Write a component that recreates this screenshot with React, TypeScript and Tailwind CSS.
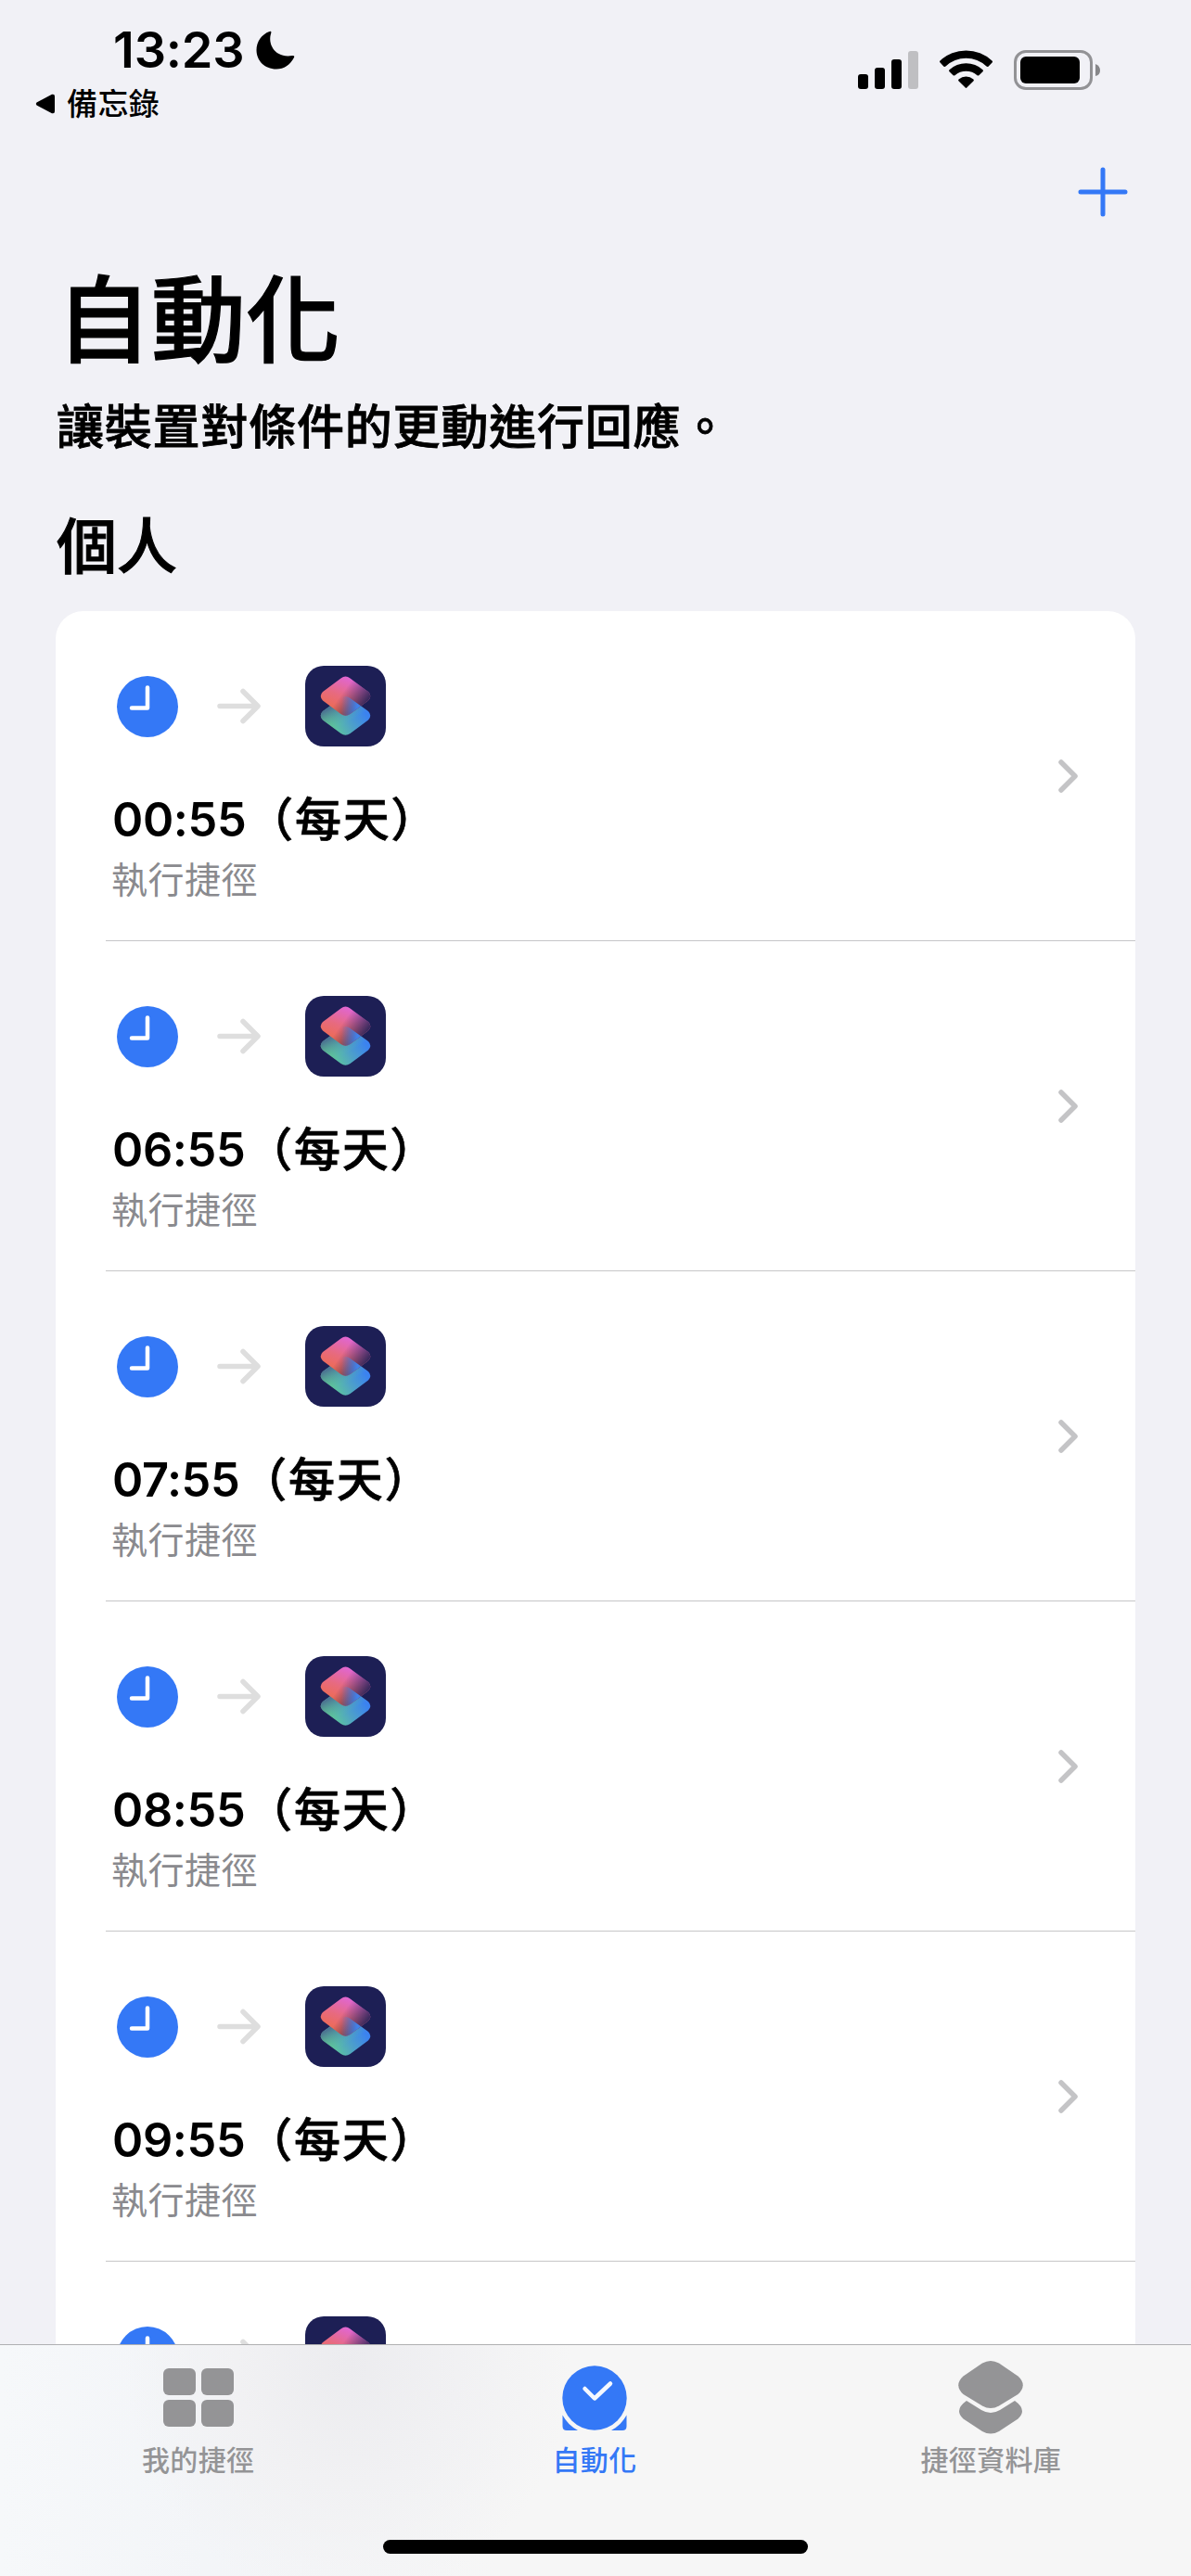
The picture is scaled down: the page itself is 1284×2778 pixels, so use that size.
import React from "react";

const rows = ["00:55", "06:55", "07:55", "08:55", "09:55"];

function StatusIcons() {
  return (
    <svg width="264" height="46" viewBox="0 0 264 46" className="block">
      <rect x="0" y="26" width="11" height="16" rx="3" />
      <rect x="18" y="19" width="11" height="23" rx="3" />
      <rect x="36" y="10" width="11" height="32" rx="3" />
      <rect x="54" y="1" width="11" height="41" rx="3" fill="#bfbfc2" />
      <path d="M88.500 11.500Q87.500 12.500 88.600 13.600L92.500 17.700Q93.500 18.500 94.500 17.600A32 32 0 0 1 138.500 17.600Q139.500 18.500 140.500 17.700L144.600 13.600Q145.500 12.500 144.500 11.500A41 41 0 0 0 88.500 11.500Z" />
      <path d="M98.500 21.200Q97.500 22.200 98.500 23.200L102.600 27.200Q103.500 28 104.500 27.200A18.500 18.500 0 0 1 128.500 27.200Q129.500 28 130.400 27.200L134.500 23.200Q135.500 22.200 134.500 21.200A26.500 26.500 0 0 0 98.500 21.200Z" />
      <path d="M108.600 31.400Q107.500 32.400 108.600 33.400L115.500 40.300Q116.500 41.500 117.500 40.300L124.400 33.400Q125.500 32.400 124.400 31.400A12.500 12.500 0 0 0 108.600 31.400Z" />
      <rect x="169.500" y="1.500" width="82" height="40" rx="11.500" fill="none" stroke="#929295" strokeWidth="3" />
      <rect x="175" y="7" width="64" height="29" rx="6" />
      <path d="M256 15Q261 17 261 22T256 28Z" fill="#87878a" />
    </svg>
  );
}

const UPPER = "M38.500 13.500Q43.500 9.500 48.500 13.500L68 28Q72.500 32.500 68 37.500L48.500 52Q43.500 55.500 38.500 52L19 37.500Q14.500 32.500 19 28Z";
const LOWER = "M38.500 35Q43.500 31 48.500 35L68 49Q72.500 53.500 68 58.500L48.500 73Q43.500 76.500 38.500 73L19 58.500Q14.500 53.500 19 49Z";

function ShortcutsIcon() {
  return (
    <svg width="87" height="87" viewBox="0 0 87 87" className="block">
      <defs>
        <linearGradient id="lower" x1="28" y1="68" x2="62" y2="46" gradientUnits="userSpaceOnUse">
          <stop offset="0" stopColor="#5fc898" />
          <stop offset="0.500" stopColor="#4ea1c8" />
          <stop offset="1" stopColor="#3b82f0" />
        </linearGradient>
        <linearGradient id="lowerFade" x1="26" y1="46" x2="38" y2="66" gradientUnits="userSpaceOnUse">
          <stop offset="0" stopColor="#4a6c90" stopOpacity="0.900" />
          <stop offset="1" stopColor="#5fc898" stopOpacity="0" />
        </linearGradient>
        <linearGradient id="upper" x1="46" y1="12" x2="32" y2="48" gradientUnits="userSpaceOnUse">
          <stop offset="0" stopColor="#e066d4" />
          <stop offset="0.550" stopColor="#e76a80" />
          <stop offset="1" stopColor="#ee6b52" />
        </linearGradient>
        <linearGradient id="upperFade" x1="44" y1="24" x2="66" y2="40" gradientUnits="userSpaceOnUse">
          <stop offset="0" stopColor="#2b2458" stopOpacity="0" />
          <stop offset="1" stopColor="#2b2458" stopOpacity="0.950" />
        </linearGradient>
        <linearGradient id="overlap" x1="39" y1="44" x2="56" y2="45" gradientUnits="userSpaceOnUse">
          <stop offset="0" stopColor="#4a84dd" stopOpacity="0" />
          <stop offset="1" stopColor="#4182ea" />
        </linearGradient>
        <clipPath id="upperClip">
          <path d={UPPER} />
        </clipPath>
      </defs>
      <rect width="87" height="87" rx="20" fill="#1d1f55" />
      <path d={LOWER} fill="url(#lower)" />
      <path d={LOWER} fill="url(#lowerFade)" />
      <path d={UPPER} fill="url(#upper)" />
      <path d={UPPER} fill="url(#upperFade)" />
      <path clipPath="url(#upperClip)" d={LOWER} fill="url(#overlap)" />
    </svg>
  );
}

function FlowIcons() {
  return (
    <div className="flex h-[87px] items-center">
      <svg width="78" height="78" viewBox="0 0 78 78" className="block">
        <circle cx="39" cy="39" r="33" fill="#3478f6" />
        <path d="M39 18.500V40.500H22" fill="none" stroke="white" strokeWidth="4.500" strokeLinecap="round" strokeLinejoin="round" />
      </svg>
      <svg width="50" height="40" viewBox="0 0 50 40" className="ml-[35px] block">
        <path d="M4 19.500H44M29 3.500L45 19.500L29 35.500" fill="none" stroke="#dedede" strokeWidth="5.500" strokeLinecap="round" strokeLinejoin="round" />
      </svg>
      <div className="ml-[46px]">
        <ShortcutsIcon />
      </div>
    </div>
  );
}

function AutomationRow({ time }: { time: string }) {
  return (
    <div className="flex h-[356px] shrink-0 flex-col">
      <div className="flex h-[355px] shrink-0 items-center justify-between pr-[60px] pl-[60px]">
        <div className="h-full pt-[59px]">
          <FlowIcons />
          <div className="mt-[47px] ml-px flex h-[64px] text-[50.500px] leading-[64px] font-semibold whitespace-nowrap text-black">
            <span className="tracking-[-0.400px]">{time}</span>
            <span className="ml-px text-[50px] font-medium tracking-[1.700px] [-webkit-text-stroke:0.700px_black]">（每天）</span>
          </div>
          <div className="mt-[8px] h-[50px] text-[39px] leading-[50px] tracking-[0.500px] text-[#8a8a8e]">執行捷徑</div>
        </div>
        <svg width="24" height="40" viewBox="0 0 24 40" className="mt-[1px] block">
          <path d="M4 5L19 20L4 35" fill="none" stroke="#c4c4c6" strokeWidth="5.500" strokeLinecap="round" strokeLinejoin="round" />
        </svg>
      </div>
      <div className="ml-[54px] h-px bg-[#c6c6c8]" />
    </div>
  );
}

function Tab({ label, active, children }: { label: string; active?: boolean; children: React.ReactNode }) {
  return (
    <div className={active ? "flex flex-1 flex-col items-center text-[#3478f6]" : "flex flex-1 flex-col items-center text-[#949496]"}>
      <div className="mt-[16px] h-[88px]">{children}</div>
      <div className="h-[40px] text-[30px] leading-[40px] font-medium tracking-[0.300px]">{label}</div>
    </div>
  );
}

export default function App() {
  return (
    <div className="flex h-[2778px] w-[1284px] flex-col overflow-hidden bg-[#f1f1f6] font-['Inter','Noto_Sans_CJK_TC',sans-serif] text-black" lang="zh-Hant">
      <header className="flex h-[150px] shrink-0 justify-between">
        <div>
          <div className="mt-[22px] ml-[122px] flex h-[64px] items-center">
            <span className="text-[54px] leading-[64px] font-semibold tracking-[-0.200px]">13:23</span>
            <svg width="42" height="42" viewBox="0 0 42 42" className="ml-[13px] block">
              <path d="M14.500 1Q17 0 16.300 2.500C12 15 21 30 39 27Q42 26.500 41 29C37 37 30 41.500 22 41.500C9 41.500 .5 32 .5 21C.5 12 6 4 14.500 1Z" />
            </svg>
          </div>
          <div className="mt-[4px] ml-[38px] flex h-[44px] items-center">
            <svg width="22" height="22" viewBox="0 0 22 22" className="block">
              <path d="M1.500 9.500L18 .8Q21 0 21 3V19Q21 22 18 21.200L1.500 12.500Q0 11 1.500 9.500Z" />
            </svg>
            <span className="ml-[12px] text-[33px] leading-[44px] font-medium tracking-[0.400px]">備忘錄</span>
          </div>
        </div>
        <div className="mt-[54px] mr-[95px]">
          <StatusIcons />
        </div>
      </header>

      <div className="flex h-[120px] shrink-0 justify-end pt-[30px] pr-[68px]">
        <svg width="54" height="54" viewBox="0 0 54 54" className="block">
          <path d="M27 3V51M3 27H51" fill="none" stroke="#3478f6" strokeWidth="5" strokeLinecap="round" />
        </svg>
      </div>

      <main className="flex min-h-0 flex-1 flex-col overflow-hidden px-[60px]">
        <h1 className="mt-[11px] ml-px h-[130px] shrink-0 text-[102px] leading-[130px] font-medium [-webkit-text-stroke:1.200px_black]">自動化</h1>
        <p className="mt-[18px] ml-px h-[64px] shrink-0 text-[51px] leading-[64px] font-medium tracking-[0.800px] [-webkit-text-stroke:0.800px_black]">讓裝置對條件的更動進行回應。</p>
        <h2 className="mt-[55px] ml-px h-[84px] shrink-0 text-[65px] leading-[84px] font-medium [-webkit-text-stroke:1px_black]">個人</h2>
        <section className="mt-[27px] flex flex-1 flex-col overflow-hidden rounded-t-[30px] bg-white">
          {rows.map((t) => (
            <AutomationRow key={t} time={t} />
          ))}
          <div className="pt-[59px] pl-[60px]">
            <FlowIcons />
          </div>
        </section>
      </main>

      <nav className="flex h-[250px] shrink-0 flex-col border-t border-[#b0b0b2] bg-[#f6f6f6] bg-[radial-gradient(ellipse_240px_260px_at_375px_20px,#ececef_0%,#f1f1f3_50%,transparent_100%),linear-gradient(90deg,#f6f8fa_0px,#f3f5f8_220px,#f6f6f6_540px)]">
        <div className="flex h-[210px] pr-[2px]">
          <Tab label="我的捷徑">
            <svg width="80" height="84" viewBox="0 0 80 84" className="block" fill="currentColor">
              <rect x="2" y="9" width="35" height="29" rx="6" />
              <rect x="43" y="9" width="35" height="29" rx="6" />
              <rect x="2" y="43" width="35" height="29" rx="6" />
              <rect x="43" y="43" width="35" height="29" rx="6" />
            </svg>
          </Tab>
          <Tab label="自動化" active>
            <svg width="72" height="84" viewBox="0 0 72 84" className="block" fill="currentColor">
              <circle cx="36" cy="41" r="34.700" />
              <path d="M25.500 31L36 41.500L53 25.500" fill="none" stroke="#f4f8ff" strokeWidth="4.500" strokeLinecap="round" strokeLinejoin="round" />
              <path d="M1.500 59.500Q7 70 18 76H6Q1.500 76 1.500 71.500ZM70.500 59.500Q65 70 54 76H66Q70.500 76 70.500 71.500Z" />
            </svg>
          </Tab>
          <Tab label="捷徑資料庫">
            <svg width="72" height="84" viewBox="0 0 72 84" className="block" fill="currentColor">
              <path d="M27 3.500Q36 -1.500 45 3.500L65.500 17.500Q76 27 65.500 37L45 49.500Q36 54.500 27 49.500L6.500 37Q-4 27 6.500 17.500Z" />
              <path d="M10 44L26 54Q36 60 46 54L62 44Q76 54 65.500 63.500L45 77Q36 82 27 77L6.500 63.500Q-4 54 10 44Z" />
            </svg>
          </Tab>
        </div>
        <div className="mx-auto h-[15px] w-[458px] rounded-full bg-black" />
      </nav>
    </div>
  );
}
